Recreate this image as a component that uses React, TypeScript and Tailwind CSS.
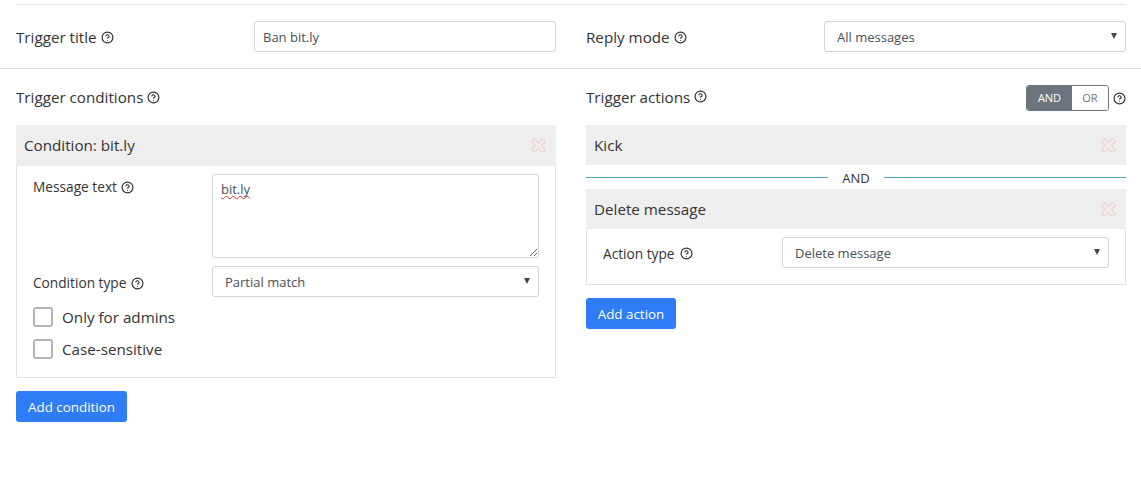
import React from 'react'
import { CircleHelp } from 'lucide-react'

const font = "font-['Open_Sans','Noto_Sans',sans-serif]"

function Help({ className = '' }: { className?: string }) {
  return <CircleHelp size={13} strokeWidth={2.1} className={`inline-block shrink-0 text-[#2b2b2b] ${className}`} />
}

function RemoveIcon() {
  return (
    <svg width="15" height="15" viewBox="0 0 15 15" fill="none" stroke="#f1d3d6" strokeWidth="1.5" strokeLinejoin="round">
      <path d="M2.6 1.2 L4.4 1.2 L7.5 4.8 L10.6 1.2 L12.4 1.2 L13.8 2.6 L13.8 4.4 L10.4 7.5 L13.8 10.6 L13.8 12.4 L12.4 13.8 L10.6 13.8 L7.5 10.2 L4.4 13.8 L2.6 13.8 L1.2 12.4 L1.2 10.6 L4.6 7.5 L1.2 4.4 L1.2 2.6 Z" />
    </svg>
  )
}

function Select({ value, className = '' }: { value: string; className?: string }) {
  return (
    <div className={`relative h-[31px] ${className}`}>
      <select
        defaultValue={value}
        className="h-full w-full appearance-none rounded-[3px] border border-[#ced4da] bg-white pl-3 pt-[2px] text-[13px] text-[#495057] outline-none"
      >
        <option>{value}</option>
      </select>
      <svg width="6" height="6" viewBox="0 0 6 6" className="absolute right-[9px] top-[12px]">
        <path d="M0 0h6L3 6z" fill="#444" />
      </svg>
    </div>
  )
}

function PanelHeader({ title, tall }: { title: string; tall?: boolean }) {
  return (
    <div className={`flex items-center justify-between bg-[#eeeeee] pl-2 pr-[10px] text-[15.2px] text-[#333] ${tall ? 'h-[41px]' : 'h-10'}`}>
      <span>{title}</span>
      <RemoveIcon />
    </div>
  )
}

function Check({ label }: { label: string }) {
  return (
    <label className="flex h-5 items-center gap-[9px] text-[15.2px] text-[#333]">
      <span className="h-5 w-5 rounded-[3px] border-2 border-[#b4b4b4] bg-white" />
      {label}
    </label>
  )
}

export default function App() {
  return (
    <div className={`min-h-[484px] bg-white pt-1 ${font}`}>
      <div className="mx-4 mr-[15px] border-t border-[#e6e6e6]" />

      {/* Top row */}
      <div className="flex h-[64px] gap-[30px] border-b border-[#e2e2e2] pl-4 pr-[15px] pt-4">
        <div className="flex w-[540px] items-start justify-between">
          <div className="flex h-[31px] items-center gap-1 pt-[2px] text-[15.2px] text-[#333]">
            Trigger title <Help />
          </div>
          <input
            defaultValue="Ban bit.ly"
            className="h-[31px] w-[302px] rounded-[3px] border border-[#ced4da] bg-white px-2 pt-px text-[13px] text-[#495057] outline-none"
          />
        </div>
        <div className="flex w-[540px] items-start justify-between">
          <div className="flex h-[31px] items-center gap-1 pt-[2px] text-[15.2px] text-[#333]">
            Reply mode <Help />
          </div>
          <Select value="All messages" className="w-[302px]" />
        </div>
      </div>

      <div className="flex gap-[30px] pl-4 pr-[15px]">
        {/* Conditions */}
        <div className="w-[540px]">
          <div className="flex h-14 items-center gap-1 text-[15.2px] text-[#333]">
            Trigger conditions <Help />
          </div>
          <PanelHeader title="Condition: bit.ly" tall />
          <div className="border border-t-0 border-[#e2e2e2] pb-[18px] pl-4 pr-4 pt-2">
            <div className="flex justify-between">
              <div className="flex h-[26px] items-center gap-1 text-[13.7px] text-[#333]">
                Message text <Help />
              </div>
              <textarea
                defaultValue="bit.ly"
                spellCheck={false}
                className="h-[84px] w-[327px] rounded-[3px] border border-[#ced4da] bg-white px-2 py-[5px] text-[13px] text-[#495057] underline decoration-[#d33] decoration-wavy decoration-1 outline-none [text-decoration-skip-ink:none]"
              />
            </div>
            <div className="mt-2 flex items-center justify-between">
              <div className="flex items-center gap-[5px] pt-[4px] text-[13.7px] text-[#333]">
                Condition type <Help />
              </div>
              <Select value="Partial match" className="w-[327px]" />
            </div>
            <div className="mt-[10px] flex flex-col gap-3">
              <Check label="Only for admins" />
              <Check label="Case-sensitive" />
            </div>
          </div>
          <button className="mt-[13px] h-[31px] w-[111px] rounded-[3px] bg-[#2e7cf6] pt-px text-[13.4px] text-white">
            Add condition
          </button>
        </div>

        {/* Actions */}
        <div className="w-[540px]">
          <div className="flex h-14 items-center justify-between">
            <div className="flex items-center gap-1 text-[15.2px] text-[#333]">
              Trigger actions <Help />
            </div>
            <div className="mt-[2px] flex items-center gap-1">
              <div className="flex h-[26px] w-[83px] overflow-hidden rounded-[3px] border border-[#6c757d] text-[11px]">
                <span className="flex w-[45px] items-center justify-center bg-[#6c757d] text-white">AND</span>
                <span className="flex flex-1 items-center justify-center bg-white text-[#6c757d]">OR</span>
              </div>
              <Help />
            </div>
          </div>
          <PanelHeader title="Kick" />
          <div className="flex h-6 items-start text-[13px] text-[#333]">
            <div className="mt-3 flex-1 border-t border-[#4fa3bf]" />
            <span className="mt-[4px] w-[56px] text-center">AND</span>
            <div className="mt-3 flex-1 border-t border-[#4fa3bf]" />
          </div>
          <PanelHeader title="Delete message" />
          <div className="flex items-center justify-between border border-t-0 border-[#e2e2e2] px-4 pb-4 pt-2">
            <div className="flex items-center gap-[5px] pt-[3px] text-[13.7px] text-[#333]">
              Action type <Help />
            </div>
            <Select value="Delete message" className="w-[327px]" />
          </div>
          <button className="mt-[13px] h-[31px] w-[90px] rounded-[3px] bg-[#2e7cf6] pt-px text-[13.4px] text-white">
            Add action
          </button>
        </div>
      </div>
    </div>
  )
}
